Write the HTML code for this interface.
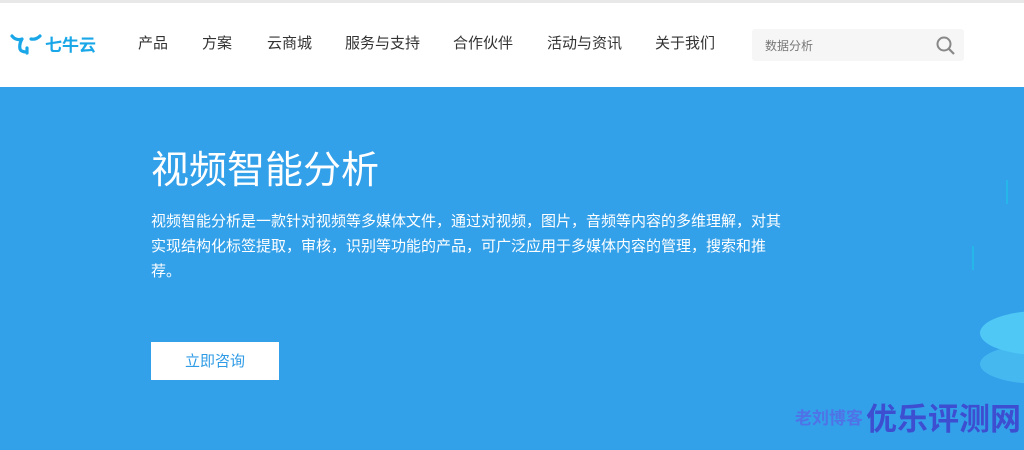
<!DOCTYPE html>
<html><head><meta charset="utf-8"><style>
*{margin:0;padding:0;box-sizing:border-box}
body{width:1024px;height:450px;overflow:hidden;font-family:"Liberation Sans","Noto Sans CJK SC",sans-serif;background:#fff;position:relative}
.top{position:absolute;top:0;left:0;width:1024px;height:3px;background:#e8e8e8}
.hdr{position:absolute;top:3px;left:0;width:1024px;height:84px;background:#fff}
.nav a{position:absolute;top:34px;font-size:15px;color:#333;text-decoration:none;line-height:20px}
.search{position:absolute;left:752px;top:29px;width:212px;height:32px;background:#f6f6f6;border-radius:3px}
.search span{position:absolute;left:13px;top:8px;font-size:12px;color:#777}
.hero{position:absolute;top:87px;left:0;width:1024px;height:363px;background:#33a0ea}
h1{position:absolute;left:151px;top:148px;font-size:38px;color:#fff;font-weight:normal;line-height:46px}
p{position:absolute;left:151px;top:209px;width:640px;font-size:15px;color:#fff;line-height:25px}
.btn{position:absolute;left:151px;top:342px;width:128px;height:38px;background:#fff;color:#2f9be6;font-size:15px;text-align:center;line-height:40px}
.wm1{position:absolute;left:795px;top:404px;font-size:17px;color:#4f73e6;font-weight:bold}
.wm2{position:absolute;left:866px;top:400px;font-size:31px;color:#3d4fd0;font-weight:bold;line-height:40px}
</style></head><body>
<div class="top"></div>
<div class="hdr"></div>
<svg style="position:absolute;left:10px;top:33px" width="86" height="22" viewBox="0 0 86 22">
<path d="M2 3 Q6 8 12 6 M12 6 Q9 11 10 16 Q11 19 17 19 M17 15 L17 20 M21 6 Q26 7 30 3" stroke="#1aa7e8" stroke-width="3.2" fill="none" stroke-linecap="round"/>
<text x="35" y="18" font-size="17" font-weight="bold" fill="#1aa7e8" font-family="Noto Sans CJK SC">七牛云</text>
</svg>
<div class="nav">
<a style="left:138px">产品</a><a style="left:202px">方案</a><a style="left:267px">云商城</a><a style="left:345px">服务与支持</a><a style="left:453px">合作伙伴</a><a style="left:547px">活动与资讯</a><a style="left:655px">关于我们</a>
</div>
<div class="search"><span>数据分析</span>
<svg style="position:absolute;left:184px;top:7px" width="20" height="20"><circle cx="8" cy="8" r="6.5" stroke="#888" stroke-width="2" fill="none"/><path d="M13 13 L18 18" stroke="#888" stroke-width="2.2"/></svg></div>
<div class="hero"></div>
<svg style="position:absolute;left:960px;top:180px" width="64" height="220">
<rect x="46" y="0" width="2" height="24" fill="#1fc0e8" opacity=".7"/>
<rect x="12" y="66" width="2" height="24" fill="#1fc0e8" opacity=".7"/>
<ellipse cx="80" cy="184" rx="60" ry="20" fill="#45b8f0"/>
<ellipse cx="80" cy="153" rx="60" ry="22" fill="#4fc8f6"/>
</svg>
<h1>视频智能分析</h1>
<p>视频智能分析是一款针对视频等多媒体文件，通过对视频，图片，音频等内容的多维理解，对其实现结构化标签提取，审核，识别等功能的产品，可广泛应用于多媒体内容的管理，搜索和推荐。</p>
<div class="btn">立即咨询</div>
<div class="wm1">老刘博客</div>
<div class="wm2">优乐评测网</div>
</body></html>
